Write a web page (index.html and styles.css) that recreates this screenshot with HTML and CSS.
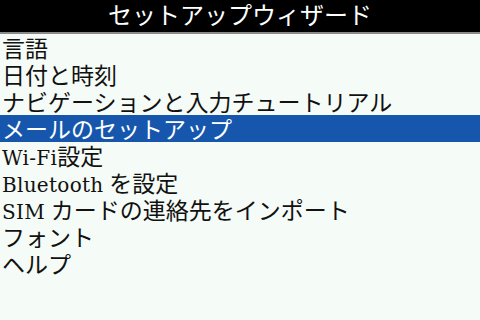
FILE: index.html
```html
<!DOCTYPE html>
<html lang="ja">
<head>
    <meta charset="UTF-8">
    <title>セットアップウィザード</title>
    <link rel="stylesheet" href="styles.css">
</head>
<body>
    <div class="wizard">
        <div class="wizard-title">セットアップウィザード</div>
        <ul class="wizard-list">
            <li class="wizard-item">言語</li>
            <li class="wizard-item">日付と時刻</li>
            <li class="wizard-item">ナビゲーションと入力チュートリアル</li>
            <li class="wizard-item selected">メールのセットアップ</li>
            <li class="wizard-item"><span class="latin">Wi-Fi</span>設定</li>
            <li class="wizard-item"><span class="latin">Bluetooth</span> を設定</li>
            <li class="wizard-item"><span class="latin">SIM</span> カードの連絡先をインポート</li>
            <li class="wizard-item">フォント</li>
            <li class="wizard-item">ヘルプ</li>
        </ul>
    </div>
</body>
</html>
```

FILE: styles.css
```css
html,
body {
    margin: 0;
    background: #f5fbf6;
}

.wizard {
    width: 480px;
    height: 320px;
    overflow: hidden;
    font-family: "Liberation Serif", "Noto Sans CJK JP", serif;
}

.wizard-title {
    height: 32px;
    line-height: 32px;
    background: #000;
    color: #fff;
    font-size: 24px;
    text-align: center;
    border-bottom: 2px solid #8a8a8a;
}

.wizard-list {
    list-style: none;
    margin: 0;
    padding: 0;
}

.wizard-item {
    height: 23px;
    line-height: 23px;
    padding: 4px 0 0 2px;
    font-size: 23px;
    color: #111;
    white-space: nowrap;
}

.wizard-item.selected {
    background: #1657ad;
    color: #fff;
}

.latin {
    font-family: "DejaVu Serif", serif;
    font-size: 20px;
    letter-spacing: 0.3px;
}
```
